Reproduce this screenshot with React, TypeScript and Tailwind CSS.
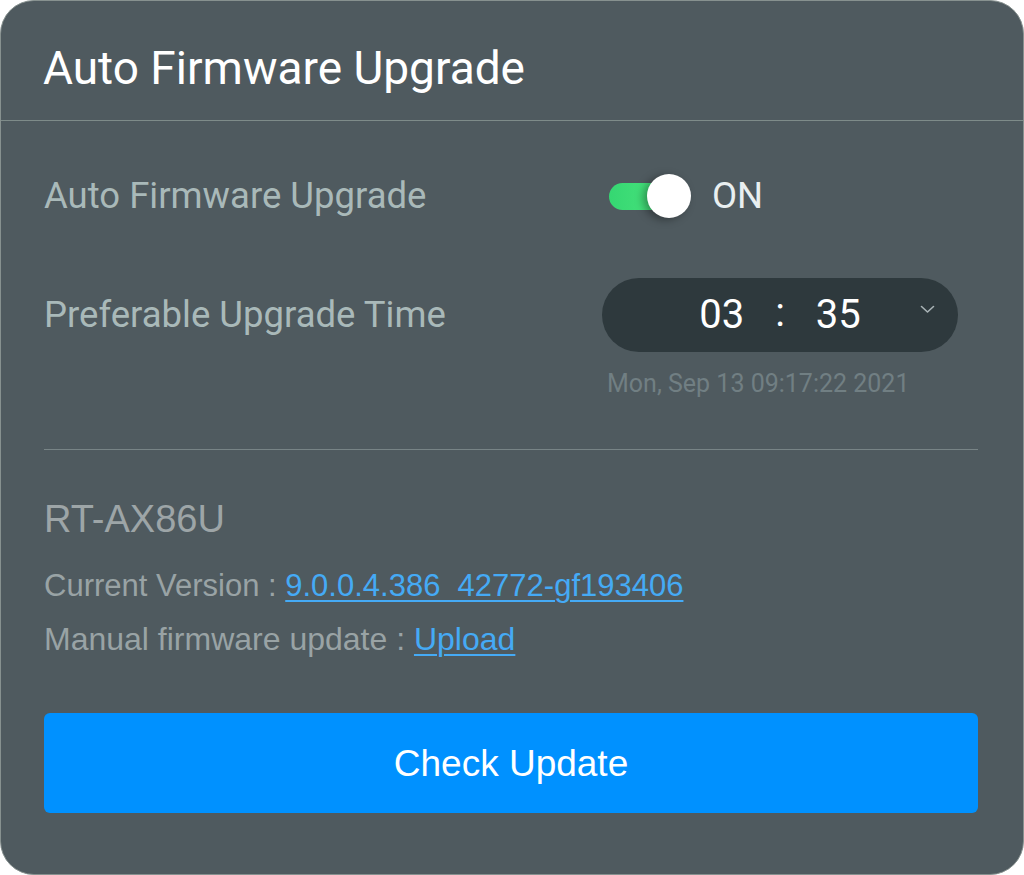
import React from 'react';

const roboto = { fontFamily: 'Roboto, "Noto Sans", sans-serif' };
const helv = { fontFamily: '"Liberation Sans", Arial, sans-serif' };

const Toggle = ({ on = true }: { on?: boolean }) => {
  return (
    <div className="flex items-center">
      <div className="relative w-[82px] h-[44px] ml-[7px]">
        <div className="absolute left-0 top-[9px] h-[27px] w-[62px] rounded-full bg-gradient-to-r from-[#35d772] to-[#4be57e]"></div>
        <div className="absolute left-[38px] top-0 w-[44px] h-[44px] rounded-full bg-white shadow-[-4px_2px_8px_rgba(0,0,0,0.35)]"></div>
      </div>
      <span className="ml-[21px] text-[36.5px] leading-none text-[#e9eff0]" style={roboto}>
        {on ? 'ON' : 'OFF'}
      </span>
    </div>
  );
};

const TimePicker = () => {
  return (
    <div className="relative w-[356px] h-[74px] rounded-full bg-[#2e393d] flex items-center justify-center gap-[31px] text-white text-[40px] leading-none" style={roboto}>
      <span>03</span>
      <span className="pb-[4px]">:</span>
      <span>35</span>
      {/* dropdown chevron */}
      <svg className="absolute right-[23px] top-[27px]" width="15" height="9" viewBox="0 0 15 9" fill="none">
        <path d="M1.5 1.5 L7.5 7 L13.5 1.5" stroke="#a9b3b6" strokeWidth="1.6" strokeLinecap="round" strokeLinejoin="round" />
      </svg>
    </div>
  );
};

export default function App() {
  return (
    <div className="w-[1024px] h-[875px] bg-white">
      <div className="h-full rounded-[34px] border border-[#87918f] bg-[#4f5a5f] flex flex-col overflow-hidden">
        {/* Header */}
        <div className="h-[120px] shrink-0 border-b border-[#7e8b89] flex items-center pl-[42px] pt-[15px]">
          <h1 className="text-[46px] leading-none text-white" style={roboto}>Auto Firmware Upgrade</h1>
        </div>

        <div className="pl-[43px] pr-[45px] pt-[53px] flex flex-col">
          {/* Auto upgrade switch */}
          <div className="flex items-center h-[44px]">
            <div className="w-[558px] text-[36.5px] leading-none text-[#a9b9b9]" style={roboto}>Auto Firmware Upgrade</div>
            <Toggle on />
          </div>

          {/* Preferable time */}
          <div className="flex items-center h-[74px] mt-[60px]">
            <div className="w-[558px] text-[36.5px] leading-none text-[#a9b9b9]" style={roboto}>Preferable Upgrade Time</div>
            <TimePicker />
          </div>
          <div className="mt-[19px] pl-[563px] text-[25px] leading-none text-[#717f83]" style={roboto}>
            Mon, Sep 13 09:17:22 2021
          </div>

          <div className="mt-[53px] h-px bg-[#788486]"></div>

          {/* Firmware info */}
          <div className="mt-[50px] text-[38px] leading-none text-[#9da5a7]" style={helv}>RT-AX86U</div>
          <div className="mt-[32px] text-[31px] leading-none text-[#99a3a5]" style={helv}>
            Current Version :{' '}
            <a href="#" className="text-[#45aaf5] underline underline-offset-[4px] decoration-[2px]">9.0.0.4.386_42772-gf193406</a>
          </div>
          <div className="mt-[22px] text-[32px] leading-none text-[#99a3a5]" style={helv}>
            Manual firmware update :{' '}
            <a href="#" className="text-[#45aaf5] underline underline-offset-[4px] decoration-[2px]">Upload</a>
          </div>

          <button className="mt-[58px] h-[100px] w-full rounded-[6px] bg-[#0091ff] text-white text-[37px] leading-none" style={helv}>
            Check Update
          </button>
        </div>
      </div>
    </div>
  );
}
